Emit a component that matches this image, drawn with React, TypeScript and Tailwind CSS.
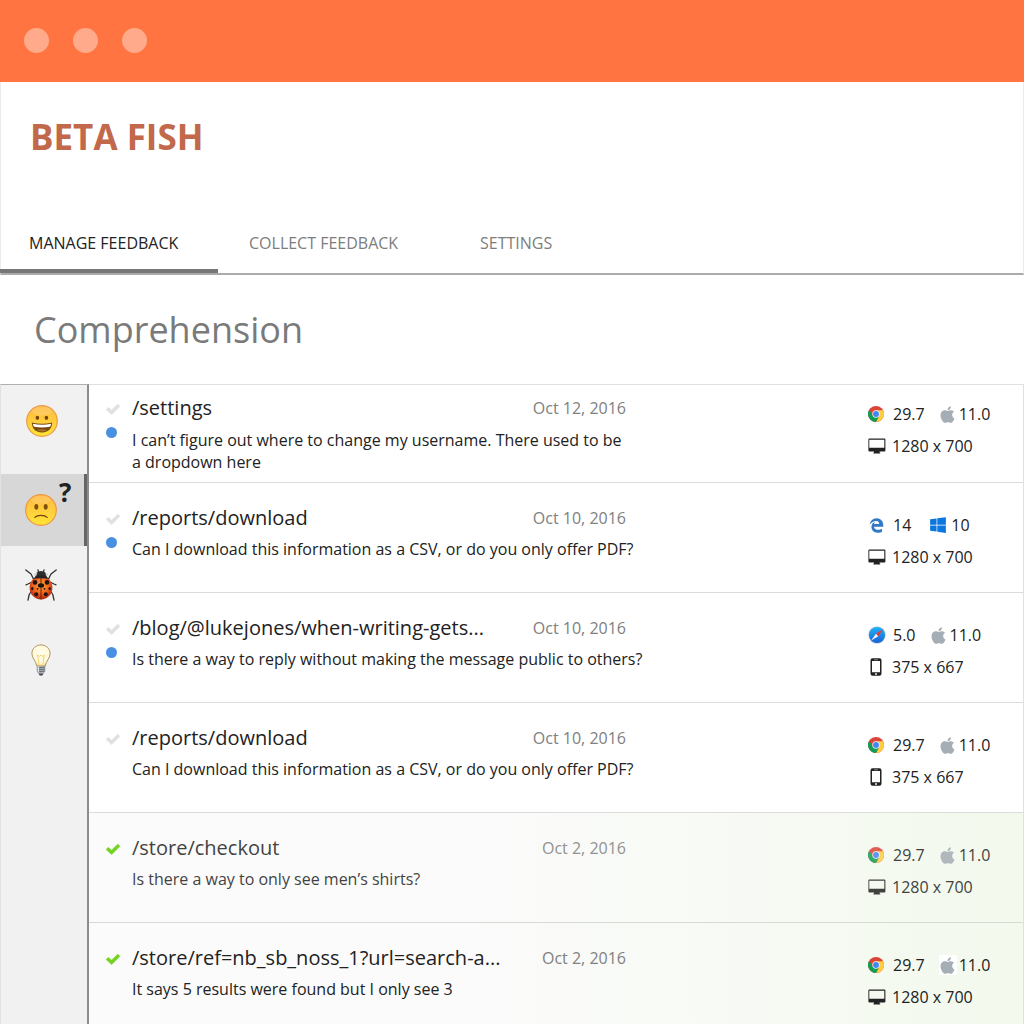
import React from "react";
import { FaApple, FaWindows } from "react-icons/fa";
import { FaEdgeLegacy } from "react-icons/fa6";

type Browser = "chrome" | "edge" | "safari";
type System = "apple" | "windows";
type Device = "desktop" | "phone";

interface Feedback {
  id: number;
  path: string;
  date: string;
  message: string;
  browser: Browser;
  browserVersion: string;
  system: System;
  systemVersion: string;
  device: Device;
  resolution: string;
  unread?: boolean;
  done?: boolean;
  faded?: boolean;
  plate?: boolean;
}

const items: Feedback[] = [
  { id: 1, path: "/settings", date: "Oct 12, 2016", message: "I can’t figure out where to change my username. There used to be\na dropdown here", browser: "chrome", browserVersion: "29.7", system: "apple", systemVersion: "11.0", device: "desktop", resolution: "1280 x 700", unread: true },
  { id: 2, path: "/reports/download", date: "Oct 10, 2016", message: "Can I download this information as a CSV, or do you only offer PDF?", browser: "edge", browserVersion: "14", system: "windows", systemVersion: "10", device: "desktop", resolution: "1280 x 700", unread: true },
  { id: 3, path: "/blog/@lukejones/when-writing-gets...", date: "Oct 10, 2016", message: "Is there a way to reply without making the message public to others?", browser: "safari", browserVersion: "5.0", system: "apple", systemVersion: "11.0", device: "phone", resolution: "375 x 667", unread: true },
  { id: 4, path: "/reports/download", date: "Oct 10, 2016", message: "Can I download this information as a CSV, or do you only offer PDF?", browser: "chrome", browserVersion: "29.7", system: "apple", systemVersion: "11.0", device: "phone", resolution: "375 x 667" },
  { id: 5, path: "/store/checkout", date: "Oct 2, 2016", message: "Is there a way to only see men’s shirts?", browser: "chrome", browserVersion: "29.7", system: "apple", systemVersion: "11.0", device: "desktop", resolution: "1280 x 700", done: true, faded: true },
  { id: 6, path: "/store/ref=nb_sb_noss_1?url=search-a...", date: "Oct 2, 2016", message: "It says 5 results were found but I only see 3", browser: "chrome", browserVersion: "29.7", system: "apple", systemVersion: "11.0", device: "desktop", resolution: "1280 x 700", done: true, plate: true },
];

function ChromeIcon() {
  return (
    <svg viewBox="0 0 48 48" className="size-4" aria-label="Chrome" role="img">
      <circle cx="24" cy="24" r="24" fill="#db4437" />
      <path d="M24 13 H45.3 A24 24 0 0 1 24 48 L33.5 29.5 Z" fill="#ffcd40" />
      <path d="M14.5 29.5 L3.8 11.2 A24 24 0 0 0 24 48 L33.5 29.5 Z" fill="#0f9d58" />
      <circle cx="24" cy="24" r="11" fill="#f4f4f4" />
      <circle cx="24" cy="24" r="8.8" fill="#4285f4" />
    </svg>
  );
}

function SafariIcon() {
  return (
    <svg viewBox="0 0 36 36" className="size-[18px]" aria-label="Safari" role="img">
      <defs>
        <linearGradient id="safariFace" x1="0" y1="0" x2="0" y2="1">
          <stop offset="0" stopColor="#1fb4f5" />
          <stop offset="1" stopColor="#1a62d6" />
        </linearGradient>
      </defs>
      <circle cx="18" cy="18" r="17.5" fill="#c3ccd6" />
      <circle cx="18" cy="18" r="16" fill="url(#safariFace)" />
      <path d="M29.5 7 L15.8 15.6 L20.4 20.4 Z" fill="#f03a30" />
      <path d="M6.5 29 L15.8 15.6 L20.4 20.4 Z" fill="#f4f6f8" />
    </svg>
  );
}

function BrowserIcon({ browser }: { browser: Browser }) {
  if (browser === "chrome") return <ChromeIcon />;
  if (browser === "safari") return <SafariIcon />;
  return <FaEdgeLegacy className="ml-px size-[15px] text-[#2f79c8]" aria-label="Edge" />;
}

function DeviceIcon({ device }: { device: Device }) {
  if (device === "phone") {
    return (
      <svg viewBox="0 0 12 18" className="mr-0.5 h-[18px] w-3" aria-label="Phone" role="img">
        <path fillRule="evenodd" fill="#222" d="M2.5 0.3 h7 a2 2 0 0 1 2 2 v13.4 a2 2 0 0 1 -2 2 h-7 a2 2 0 0 1 -2 -2 v-13.4 a2 2 0 0 1 2 -2 Z M2 3 v11.3 h8 v-11.3 Z" />
        <rect x="4" y="1.4" width="4" height="0.8" rx="0.4" fill="#aaa" />
        <circle cx="6" cy="16" r="1" fill="#eee" />
      </svg>
    );
  }
  return (
    <svg viewBox="0 0 18 16" className="h-4 w-[18px]" aria-label="Desktop" role="img">
      <path fillRule="evenodd" fill="#222" d="M1.2 0.6 h15.2 a1 1 0 0 1 1 1 v10.8 a1 1 0 0 1 -1 1 h-4.8 v1.2 h0.6 v1 h-6.8 v-1 h0.6 v-1.2 h-4.6 a1 1 0 0 1 -1 -1 v-10.8 a1 1 0 0 1 1 -1 Z M1.3 1.7 v8 h15 v-8 Z" />
    </svg>
  );
}

function FaceGradient({ id }: { id: string }) {
  return (
    <defs>
      <linearGradient id={id} x1="0" y1="0" x2="0" y2="1">
        <stop offset="0" stopColor="#ffb83e" />
        <stop offset="0.45" stopColor="#ffcb3e" />
        <stop offset="1" stopColor="#ffe636" />
      </linearGradient>
    </defs>
  );
}

function GrinIcon() {
  return (
    <svg viewBox="0 0 32 32" className="ml-px size-8" aria-hidden="true">
      <FaceGradient id="grinFace" />
      <circle cx="16" cy="16" r="15.3" fill="url(#grinFace)" stroke="#eb9b48" strokeWidth="1.2" />
      <ellipse cx="16" cy="6" rx="10" ry="4.5" fill="#fff" opacity="0.16" />
      <ellipse cx="11.4" cy="12.8" rx="1.8" ry="2.1" fill="#75450b" />
      <ellipse cx="20.4" cy="12.8" rx="1.8" ry="2.1" fill="#75450b" />
      <path d="M5.8 17.4 Q16 20 26.2 17.4 C26 24 21.8 27.4 16 27.4 C10.2 27.4 6 24 5.8 17.4 Z" fill="#76480d" />
      <path d="M6.8 18.8 Q16 20.8 25.2 18.8 Q24.8 20.8 24 21.8 Q16 23.4 8 21.8 Q7.2 20.8 6.8 18.8 Z" fill="#fff" />
      <path d="M10.5 25 Q16 23.4 21.5 25 Q19.4 26.6 16 26.6 Q12.6 26.6 10.5 25 Z" fill="#a87320" />
    </svg>
  );
}

function FrownIcon() {
  return (
    <svg viewBox="0 0 32 32" className="size-8" aria-hidden="true">
      <FaceGradient id="frownFace" />
      <circle cx="16" cy="16" r="15.3" fill="url(#frownFace)" stroke="#f0963f" strokeWidth="1.2" />
      <ellipse cx="16" cy="5.6" rx="10" ry="4" fill="#fff" opacity="0.14" />
      <ellipse cx="11.3" cy="12.8" rx="2" ry="2.9" fill="#80500f" />
      <ellipse cx="20.7" cy="12.8" rx="2" ry="2.9" fill="#80500f" />
      <path d="M9.8 23.4 C12.5 20.6 19.5 20.6 22.2 23.4" fill="none" stroke="#74440c" strokeWidth="1.3" strokeLinecap="round" />
    </svg>
  );
}

function LadybugIcon() {
  return (
    <svg viewBox="0 0 32 32" className="size-8" aria-hidden="true">
      <defs>
        <radialGradient id="bugShell" cx="0.5" cy="0.4" r="0.62">
          <stop offset="0" stopColor="#ffa436" />
          <stop offset="0.6" stopColor="#ee5c1c" />
          <stop offset="1" stopColor="#a3200b" />
        </radialGradient>
      </defs>
      <g fill="none" stroke="#333" strokeWidth="1.3" strokeLinecap="round" strokeLinejoin="round">
        <path d="M8.5 10 L6 5 L0.8 0.9 M23.5 10 L26 5 L31.2 0.9" />
        <path d="M6 13.5 L3 15 L1 15.8 M26 13.5 L29 15 L31 15.8" />
        <path d="M6.5 22 L4.2 25.5 L3 31.2 M25.5 22 L27.8 25.5 L29 31.2" />
        <path d="M13.5 3 L13 0.8 M18.5 3 L19 0.8" />
      </g>
      <path d="M10.2 8 Q10.5 2.2 16 2 Q21.5 2.2 21.8 8 Z" fill="#2d2d2f" />
      <ellipse cx="16" cy="18.7" rx="11.4" ry="11.8" fill="url(#bugShell)" />
      <path d="M8 10 Q10.5 6.4 16 6.2 Q21.5 6.4 24 10 Q20.5 9 16 9.2 Q11.5 9 8 10 Z" fill="#242426" />
      <path d="M8.8 5.4 Q10.2 3.6 12.4 4.2 L10.8 7.6 Z M23.2 5.4 Q21.8 4 20.4 4.8 L21.4 7.2 Z" fill="#cdcfd1" />
      <path d="M16 9.2 V30.3" stroke="#54180a" strokeWidth="0.9" />
      <g fill="#1d1412">
        <ellipse cx="16" cy="16.4" rx="3.1" ry="2.2" />
        <circle cx="10" cy="13.4" r="2.3" />
        <circle cx="22" cy="13.4" r="2.3" />
        <circle cx="12.6" cy="19.8" r="0.9" />
        <circle cx="19.4" cy="19.8" r="0.9" />
        <ellipse cx="7.3" cy="19.6" rx="1.2" ry="1.7" />
        <ellipse cx="24.7" cy="19.6" rx="1.2" ry="1.7" />
        <circle cx="11.2" cy="25.2" r="2" />
        <circle cx="20.8" cy="25.2" r="2" />
      </g>
    </svg>
  );
}

function BulbIcon() {
  return (
    <svg viewBox="0 0 32 32" className="size-8" aria-hidden="true">
      <defs>
        <radialGradient id="bulbGlass" cx="0.5" cy="0.42" r="0.6">
          <stop offset="0" stopColor="#fffdf0" />
          <stop offset="0.75" stopColor="#fffad8" />
          <stop offset="1" stopColor="#f3d98a" />
        </radialGradient>
      </defs>
      <path d="M16 0.9 C21.2 0.9 25.1 4.7 25.1 9.7 C25.1 14.4 21 16.5 20.3 22 H11.7 C11 16.5 6.9 14.4 6.9 9.7 C6.9 4.7 10.8 0.9 16 0.9 Z" fill="url(#bulbGlass)" stroke="#a78a52" strokeWidth="0.9" />
      <path d="M14.2 21.5 L12.7 11 L14.4 12.4 L16 11 L17.6 12.4 L19.3 11 L17.8 21.5" fill="none" stroke="#f5cd68" strokeWidth="0.9" strokeLinejoin="round" />
      <path d="M11.8 22 H20.2 V27.6 L18.6 29.6 H13.4 L11.8 27.6 Z" fill="#a9afb5" />
      <path d="M11.8 23.9 L20.2 23.1 M11.8 25.9 L20.2 25.1 M12 27.9 L20 27.1" stroke="#5f666d" strokeWidth="0.9" />
      <path d="M13.4 29.4 H18.6 L17.3 31.4 H14.7 Z" fill="#3f454b" />
      <path d="M13.3 22.5 V28.5" stroke="#eef1f3" strokeWidth="1.1" />
    </svg>
  );
}

const categories = [
  { label: "Praise", icon: <GrinIcon />, spacing: "mb-[17px]" },
  { label: "Comprehension", icon: <FrownIcon />, spacing: "mb-[3px]", active: true },
  { label: "Bugs", icon: <LadybugIcon />, spacing: "mb-[3px]" },
  { label: "Ideas", icon: <BulbIcon />, spacing: "" },
];

function FeedbackRow({ item, first }: { item: Feedback; first: boolean }) {
  return (
    <li
      className={`flex shrink-0 border-b pl-4 ${first ? "pt-[9px] pb-[9px]" : "min-h-[110px] pt-[21px]"} ${
        item.done
          ? "border-[#d6dad2] bg-linear-to-r from-[#fbfbfb] from-40% to-[#f3f9ed]"
          : "border-[#dcdcdc] bg-white"
      }`}
    >
      <div className="flex min-w-0 flex-1">
        <div className="flex w-[27px] shrink-0 flex-col items-start">
          <label className="mt-2 cursor-pointer">
            <input type="checkbox" defaultChecked={item.done} aria-label={`Mark ${item.path} as done`} className="peer sr-only" />
            <svg viewBox="0 0 16 14" className="h-[14px] w-4 text-[#e0e0e0] peer-checked:text-[#73d321]" aria-hidden="true">
              <path d="M1.2 7.6 L3.2 5.4 L6.6 8.2 L12.8 2.2 L14.9 4.3 L6.7 12.5 Z" fill="currentColor" stroke="currentColor" strokeWidth="0.7" strokeLinejoin="round" />
            </svg>
          </label>
          {item.unread && <span aria-label="Unread" className="mt-[11px] ml-px size-[11px] rounded-full bg-[#4a90e2]" />}
        </div>
        <div className={`min-w-0 ${item.faded ? "opacity-85" : ""}`}>
          <div className="flex w-[494px] items-center justify-between">
            <h2 className="text-[20px] leading-7 whitespace-nowrap">
              <a href="#feedback">{item.path}</a>
            </h2>
            <time className="text-[16px] leading-7 whitespace-nowrap text-[#808080]">{item.date}</time>
          </div>
          <p className={`text-[16px] leading-[22px] whitespace-pre-line ${first ? "mt-[7px]" : "mt-1.5"}`}>{item.message}</p>
        </div>
      </div>
      <div className={`flex w-[155px] shrink-0 flex-col gap-1 text-[16px] leading-7 ${first ? "mt-1.5" : "mt-[7px]"} ${item.faded ? "opacity-85" : ""}`}>
        <div className="flex items-center">
          <span className="mr-[7px] flex w-[18px] items-center">
            <BrowserIcon browser={item.browser} />
          </span>
          <span>{item.browserVersion}</span>
          {item.system === "apple" ? (
            <span className={`ml-3.5 flex h-5 w-[18px] items-center justify-center ${item.plate ? "bg-white" : ""}`}>
              <FaApple className="size-[19px] shrink-0 text-[#a5adb5]" aria-label="macOS" />
            </span>
          ) : (
            <FaWindows className="mr-0.5 ml-[18px] size-[18px] text-[#0b76de]" aria-label="Windows" />
          )}
          <span className="ml-0.5">{item.systemVersion}</span>
        </div>
        <div className="flex items-center">
          <span className="mr-1.5 flex w-[18px] items-center justify-center">
            <DeviceIcon device={item.device} />
          </span>
          <span>{item.resolution}</span>
        </div>
      </div>
    </li>
  );
}

export default function App() {
  return (
    <div className="flex h-screen flex-col overflow-hidden bg-white font-['Open_Sans',sans-serif] text-[#222]">
      <div className="flex h-[82px] shrink-0 items-center gap-6 bg-[#ff7441] pb-0.5 pl-6">
        <span className="size-[25px] rounded-full bg-[#ffab8b]" />
        <span className="size-[25px] rounded-full bg-[#ffab8b]" />
        <span className="size-[25px] rounded-full bg-[#ffab8b]" />
      </div>

      <header className="shrink-0 border-x border-b-2 border-x-[#ebebeb] border-b-[#ababab]">
        <h1 className="pt-[31px] pl-[29px] text-[35px] leading-[48px] font-bold text-[#c1694a]">BETA FISH</h1>
        <nav className="mt-[52px] -ml-px flex text-[16px] leading-6">
          <a href="#manage" aria-current="page" className="w-[218px] border-b-4 border-[#777] pt-[18px] pb-3.5 pl-[29px]">MANAGE FEEDBACK</a>
          <a href="#collect" className="w-[231px] pt-[18px] pl-[31px] text-[#7d7d7d]">COLLECT FEEDBACK</a>
          <a href="#settings" className="pt-[18px] pl-[31px] text-[#7d7d7d]">SETTINGS</a>
        </nav>
      </header>

      <h2 className="shrink-0 pt-[31px] pb-[30px] pl-[34px] text-[36px] leading-[48px] text-[#7a7a7a]">Comprehension</h2>

      <main className="flex min-h-0 flex-1">
        <aside className="flex w-[89px] shrink-0 flex-col border-t border-r-2 border-l border-t-[#b0b0b0] border-r-[#8c8c8c] border-l-[#e2e2e2] bg-[#f1f1f1]">
          {categories.map((c) => (
            <button
              key={c.label}
              type="button"
              aria-label={c.label}
              className={`relative flex h-[72px] shrink-0 items-center pl-6 ${c.spacing} ${c.active ? "border-r-[3px] border-[#666] bg-[#d7d7d7]" : ""}`}
            >
              {c.icon}
              {c.active && <span className="absolute top-[3px] left-[58px] text-[26px] leading-[30px] font-bold">?</span>}
            </button>
          ))}
        </aside>
        <ul className="flex min-w-0 flex-1 flex-col border-t border-r border-[#e0e0e0]">
          {items.map((item, i) => (
            <FeedbackRow key={item.id} item={item} first={i === 0} />
          ))}
        </ul>
      </main>
    </div>
  );
}
